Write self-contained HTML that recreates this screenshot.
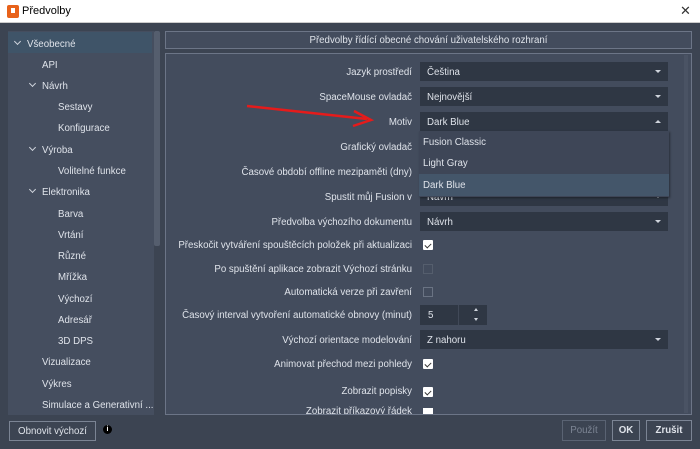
<!DOCTYPE html>
<html><head><meta charset="utf-8"><style>
*{box-sizing:border-box;margin:0;padding:0}
body{width:700px;height:449px;overflow:hidden;background:#3c4452;font-family:"Liberation Sans","DejaVu Sans",sans-serif;font-size:9.7px;color:#dfe3ea;position:relative}
.a{position:absolute;white-space:nowrap}
.tb{left:0;top:0;width:700px;height:23px;background:#fff;color:#000;font-size:11px;border-bottom:1px solid #ccc}
.tree{left:8px;top:31px;width:146px;height:384px;background:#454e5f}
.sb{background:#555e6e}
.lbl{right:288px;text-align:right}
.cb{left:420px;width:248px;height:19px;background:#2f3744;padding:5px 7px 0}
.cb::after{content:"";position:absolute;right:7px;top:8px;border-left:3px solid transparent;border-right:3px solid transparent;border-top:3px solid #cfd4dc}
.up::after{border-top:none;border-bottom:3px solid #cfd4dc}
.ck{left:423px;width:10px;height:10px;background:#fff;border-radius:1px}
.ck::after{content:"";position:absolute;left:2px;width:5px;height:3px;border-left:1.5px solid #333;border-bottom:1.5px solid #333;transform:rotate(-45deg);top:2.5px}
.un{left:423px;width:10px;height:10px;border:1px solid #6a7383;background:transparent}
.dis{border-color:#555e6d}
.btn{height:21px;border:1px solid #7b8494;background:#3c4452;text-align:center;line-height:19px}
.chev{width:5px;height:5px;border-right:1.3px solid #cfd4dc;border-bottom:1.3px solid #cfd4dc;transform:rotate(45deg)}
.t{margin-top:2px}
</style></head><body>
<div class="a tb"><div class="a" style="left:7px;top:5px;width:12px;height:13px;background:#e8621a;border-radius:2px"></div><div class="a" style="left:11px;top:8px;width:4px;height:5px;background:#fff"></div><span class="a" style="left:22px;top:5px">Předvolby</span>
<span class="a" style="left:680px;top:3px;font-size:13px;color:#333">✕</span></div>

<div class="a tree"></div>
<div class="a" style="left:8px;top:32px;width:144px;height:21px;background:#3f5468"></div>
<div class="a sb" style="left:154px;top:31px;width:6px;height:215px;border-radius:2px"></div>

<div style="position:absolute;left:0;top:2px;width:170px;height:410px">
<div class="a chev" style="left:15px;top:37px"></div><span class="a" style="left:27px;top:37px">Všeobecné</span>
<span class="a" style="left:42px;top:58px">API</span>
<div class="a chev" style="left:30px;top:79px"></div><span class="a" style="left:42px;top:79px">Návrh</span>
<span class="a" style="left:58px;top:100px">Sestavy</span>
<span class="a" style="left:58px;top:121px">Konfigurace</span>
<div class="a chev" style="left:30px;top:143px"></div><span class="a" style="left:42px;top:143px">Výroba</span>
<span class="a" style="left:58px;top:164px">Volitelné funkce</span>
<div class="a chev" style="left:30px;top:185px"></div><span class="a" style="left:42px;top:185px">Elektronika</span>
<span class="a" style="left:58px;top:207px">Barva</span>
<span class="a" style="left:58px;top:228px">Vrtání</span>
<span class="a" style="left:58px;top:249px">Různé</span>
<span class="a" style="left:58px;top:270px">Mřížka</span>
<span class="a" style="left:58px;top:292px">Výchozí</span>
<span class="a" style="left:58px;top:313px">Adresář</span>
<span class="a" style="left:58px;top:334px">3D DPS</span>
<span class="a" style="left:42px;top:355px">Vizualizace</span>
<span class="a" style="left:42px;top:377px">Výkres</span>
<span class="a" style="left:42px;top:398px">Simulace a Generativní ...</span>
</div>

<div class="a" style="left:165px;top:31px;width:527px;height:18px;background:#434c5d;border:1px solid #6c7587;text-align:center;line-height:17px">Předvolby řídící obecné chování uživatelského rozhraní</div>
<div class="a" style="left:165px;top:53px;width:527px;height:362px;background:#434c5d;border:1px solid #6c7587"></div>
<div class="a" style="left:684px;top:55px;width:4px;height:358px;background:#4a5364"></div>

<span class="a lbl" style="top:67px">Jazyk prostředí</span><div class="a cb" style="top:62px">Čeština</div>
<span class="a lbl" style="top:92px">SpaceMouse ovladač</span><div class="a cb" style="top:87px">Nejnovější</div>
<span class="a lbl" style="top:117px">Motiv</span><div class="a cb up" style="top:112px">Dark Blue</div>
<span class="a lbl" style="top:142px">Grafický ovladač</span>
<span class="a lbl" style="top:167px">Časové období offline mezipaměti (dny)</span>
<span class="a lbl" style="top:192px">Spustit můj Fusion v</span><div class="a cb" style="top:187px">Návrh</div>
<span class="a lbl" style="top:217px">Předvolba výchozího dokumentu</span><div class="a cb" style="top:212px">Návrh</div>

<div class="a" style="left:419px;top:131px;width:250px;height:66px;background:#3e4657;box-shadow:1px 1px 2px rgba(0,0,0,.4)"></div>
<span class="a" style="left:423px;top:137px">Fusion Classic</span>
<span class="a" style="left:423px;top:158px">Light Gray</span>
<div class="a" style="left:419px;top:174px;width:250px;height:22px;background:#44566a"></div>
<span class="a" style="left:423px;top:180px">Dark Blue</span>

<svg class="a" style="left:245px;top:100px" width="140" height="30"><line x1="2" y1="6" x2="122" y2="19" stroke="#e51b1b" stroke-width="2.5"/><path d="M109 11 L126 20 L108 26" fill="none" stroke="#e51b1b" stroke-width="2.5"/></svg>

<span class="a lbl" style="top:240px">Přeskočit vytváření spouštěcích položek při aktualizaci</span><div class="a ck" style="top:240px"></div>
<span class="a lbl" style="top:264px">Po spuštění aplikace zobrazit Výchozí stránku</span><div class="a un dis" style="top:264px"></div>
<span class="a lbl" style="top:287px">Automatická verze při zavření</span><div class="a un" style="top:287px"></div>
<span class="a lbl" style="top:310px">Časový interval vytvoření automatické obnovy (minut)</span>
<div class="a" style="left:420px;top:305px;width:67px;height:20px;background:#2f3744;padding:5px 8px 0">5</div>
<div class="a" style="left:458px;top:305px;width:1px;height:20px;background:#414958"></div>
<div class="a" style="left:474px;top:308px;border-left:2.5px solid transparent;border-right:2.5px solid transparent;border-bottom:3px solid #cfd4dc"></div>
<div class="a" style="left:474px;top:318px;border-left:2.5px solid transparent;border-right:2.5px solid transparent;border-top:3px solid #cfd4dc"></div>
<span class="a lbl" style="top:335px">Výchozí orientace modelování</span><div class="a cb" style="top:330px">Z nahoru</div>
<span class="a lbl" style="top:359px">Animovat přechod mezi pohledy</span><div class="a ck" style="top:359px"></div>
<span class="a lbl" style="top:386px">Zobrazit popisky</span><div class="a ck" style="top:387px"></div>
<div class="a" style="left:166px;top:405px;width:518px;height:9px;overflow:hidden"><span class="a" style="right:272px;top:1px">Zobrazit příkazový řádek</span><div class="a" style="left:257px;top:3px;width:10px;height:10px;background:#fff"></div></div>

<div class="a btn" style="left:9px;top:421px;width:87px;height:20px">Obnovit výchozí</div>
<div class="a" style="left:103px;top:425px;width:9px;height:9px;border-radius:50%;background:#000;color:#fff;font-size:7px;font-weight:bold;text-align:center;line-height:9px">i</div>
<div class="a btn" style="left:562px;top:420px;width:44px;color:#7d8594;border-color:#5a6373">Použít</div>
<div class="a btn" style="left:612px;top:420px;width:28px;font-weight:bold">OK</div>
<div class="a btn" style="left:646px;top:420px;width:46px;font-weight:bold">Zrušit</div>
</body></html>
